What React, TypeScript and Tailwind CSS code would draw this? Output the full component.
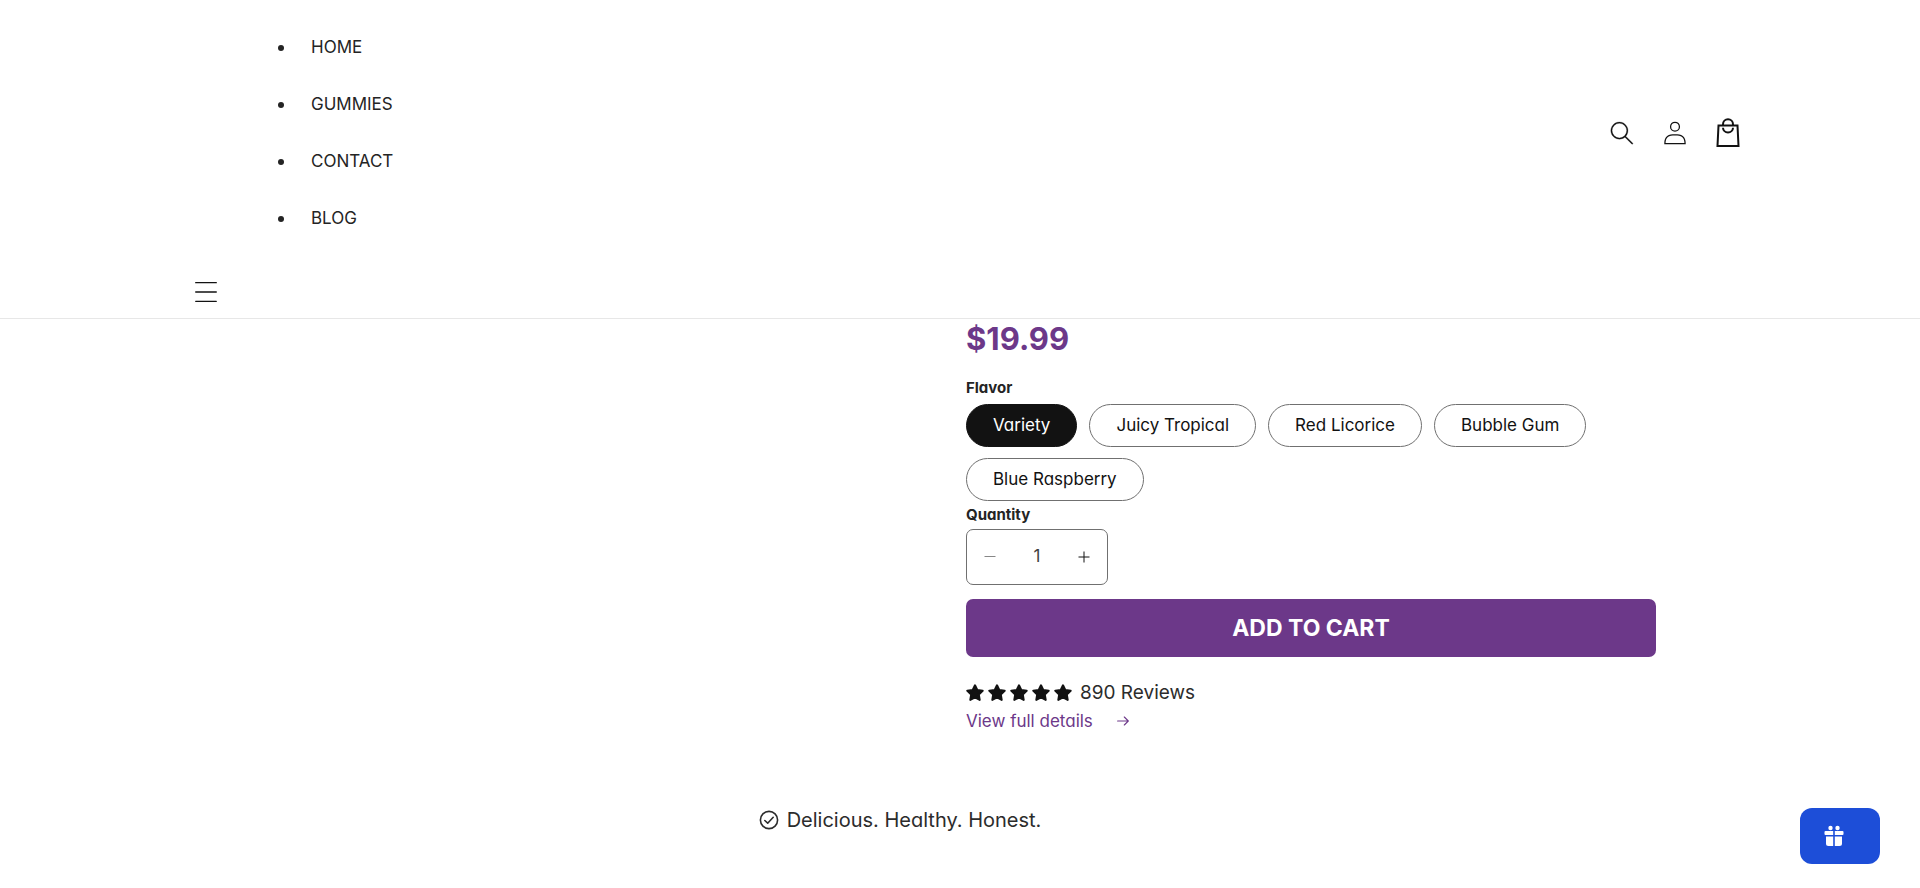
import { useState } from "react";

const links = ["HOME", "GUMMIES", "CONTACT", "BLOG"];
const flavors = ["Variety", "Juicy Tropical", "Red Licorice", "Bubble Gum", "Blue Raspberry"];

function SearchIcon() {
  return (
    <svg viewBox="0 0 18 19" className="h-6 w-6" fill="currentColor" stroke="currentColor" strokeWidth="0.2" aria-hidden="true">
      <path
        fillRule="evenodd"
        clipRule="evenodd"
        d="M11.03 11.68A5.784 5.784 0 112.85 3.5a5.784 5.784 0 018.18 8.18zm.26 1.12a6.78 6.78 0 11.72-.7l5.4 5.4a.5.5 0 11-.71.7l-5.41-5.4z"
      />
    </svg>
  );
}

function AccountIcon() {
  return (
    <svg viewBox="0 0 18 19" className="h-6 w-6" fill="currentColor" aria-hidden="true">
      <path
        fillRule="evenodd"
        clipRule="evenodd"
        d="M6 4.5a3 3 0 116 0 3 3 0 01-6 0zm3-4a4 4 0 100 8 4 4 0 000-8zm5.58 12.15c1.12.82 1.83 2.24 1.91 4.85H1.51c.08-2.6.79-4.03 1.9-4.85C4.66 11.75 6.5 11.5 9 11.5s4.35.26 5.58 1.15zM9 10.5c-2.5 0-4.65.24-6.17 1.35C1.27 12.98.5 14.93.5 18v.5h17V18c0-3.07-.77-5.02-2.33-6.15-1.52-1.1-3.67-1.35-6.17-1.35z"
      />
    </svg>
  );
}

function BagIcon() {
  return (
    <svg viewBox="0 0 24 30" className="h-[30px] w-6" fill="none" stroke="currentColor" strokeWidth="2" aria-hidden="true">
      <path d="M2.5 7.5h19l1 20.5h-21z" />
      <path d="M7 7.5V6.300a5 5 0 0 1 10 0v1.200" />
      <path d="M7 9.800a5 4.600 0 0 0 10 0" />
    </svg>
  );
}

function Star() {
  return (
    <svg viewBox="0 0 18 18" className="h-[18px] w-[18px]" fill="currentColor" stroke="currentColor" strokeWidth="2" strokeLinejoin="round" aria-hidden="true">
      <path d="M9 1.3l2.300 4.700 5.400.8-3.900 3.700.9 5.400L9 13.400l-4.700 2.500.9-5.400L1.300 6.800l5.400-.8z" />
    </svg>
  );
}

function Header() {
  return (
    <header className="border-b border-[#e7e7e7] bg-white">
      <div className="mx-auto max-w-[1600px] pt-[19px] pr-2.5 pb-1 pl-6">
        <div className="flex items-center justify-between">
          <nav>
            <ul className="pl-[94px]">
              {links.map((link) => (
                <li
                  key={link}
                  className="flex items-center py-4 text-[17px] leading-[25px] text-[#242424] before:h-1.5 before:w-1.5 before:rounded-full before:bg-[#242424]"
                >
                  <a href="#" className="pr-3 pl-[27px] hover:underline">
                    {link}
                  </a>
                </li>
              ))}
            </ul>
          </nav>
          <div className="flex gap-[9px]">
            <button aria-label="Search" className="flex h-11 w-11 items-center justify-center">
              <SearchIcon />
            </button>
            <a href="#" aria-label="Log in" className="flex h-11 w-11 items-center justify-center">
              <AccountIcon />
            </a>
            <a href="#" aria-label="Cart" className="flex h-11 w-11 items-center justify-center">
              <BagIcon />
            </a>
          </div>
        </div>
        <button aria-label="Menu" className="mt-[23px] flex h-11 w-11 items-center justify-center">
          <svg viewBox="0 0 22 20" className="h-5 w-[22px]" stroke="currentColor" strokeWidth="1.3" strokeLinecap="round" aria-hidden="true">
            <path d="M.7.7h20.6M.7 10h20.6M.7 19.3h20.6" />
          </svg>
        </button>
      </div>
    </header>
  );
}

function Product() {
  const [flavor, setFlavor] = useState("Variety");
  const [quantity, setQuantity] = useState(1);

  return (
    <section className="mx-auto grid max-w-[1392px] grid-cols-2 gap-3">
      <div className="col-start-2">
        <p className="text-[31px] leading-10 font-bold text-[#6c3889]">$19.99</p>

        <fieldset className="mt-[17px]">
          <legend className="text-[15px] leading-6 font-bold text-[#242424]">Flavor</legend>
          <div className="mt-1 flex flex-wrap gap-x-3 gap-y-[11px]">
            {flavors.map((name) => (
              <label
                key={name}
                className="cursor-pointer rounded-full border border-[#707070] px-[26px] py-2 text-[17px] leading-[25px] has-checked:border-[#121212] has-checked:bg-[#121212] has-checked:text-white"
              >
                <input
                  type="radio"
                  name="flavor"
                  value={name}
                  checked={flavor === name}
                  onChange={() => setFlavor(name)}
                  className="sr-only"
                />
                {name}
              </label>
            ))}
          </div>
        </fieldset>

        <label htmlFor="quantity" className="block text-[15px] leading-7 font-bold text-[#242424]">
          Quantity
        </label>
        <div className="flex h-14 w-[142px] items-center rounded-[7px] border border-[#707070]">
          <button
            aria-label="Decrease quantity"
            disabled={quantity === 1}
            onClick={() => setQuantity(quantity - 1)}
            className="flex h-full w-[46px] items-center justify-center disabled:opacity-50"
          >
            <svg viewBox="0 0 12 12" className="h-3 w-3" stroke="currentColor" aria-hidden="true">
              <path d="M.5 5.5h11" />
            </svg>
          </button>
          <input
            id="quantity"
            value={quantity}
            onChange={(e) => setQuantity(Math.max(1, Number(e.target.value) || 1))}
            className="min-w-0 flex-1 text-center text-[17px] text-[#404040] outline-none"
          />
          <button
            aria-label="Increase quantity"
            onClick={() => setQuantity(quantity + 1)}
            className="flex h-full w-[46px] items-center justify-center"
          >
            <svg viewBox="0 0 12 12" className="h-3 w-3" stroke="currentColor" aria-hidden="true">
              <path d="M.5 6h11M6 .5v11" />
            </svg>
          </button>
        </div>

        <button className="mt-3.5 h-[58px] w-full rounded-[7px] bg-[#6c3889] text-[23px] font-bold text-white hover:bg-[#5f3079]">
          ADD TO CART
        </button>

        <div className="mt-[22px] flex items-center gap-2">
          <div className="flex gap-1" role="img" aria-label="5 out of 5 stars">
            {[1, 2, 3, 4, 5].map((i) => (
              <Star key={i} />
            ))}
          </div>
          <span className="text-[19px] leading-7 text-[#2c2c2c]">890 Reviews</span>
        </div>
        <a href="#" className="mt-0.5 inline-flex items-center gap-6 text-[17px] leading-6 text-[#6c3889]">
          View full details
          <svg viewBox="0 0 12 10" className="h-2.5 w-3" fill="none" stroke="currentColor" strokeWidth="1.1" strokeLinecap="round" strokeLinejoin="round" aria-hidden="true">
            <path d="M.6 5h10.6M7.3 1l4 4-4 4" />
          </svg>
        </a>
      </div>
    </section>
  );
}

export default function App() {
  return (
    <div className="min-h-screen bg-white font-[Inter,sans-serif] text-[#121212] [font-feature-settings:'cv11']">
      <Header />
      <Product />

      <div className="mt-[73px] flex items-center justify-center gap-2 pr-30 text-xl leading-7 text-[#2c2c2c]">
        <svg viewBox="0 0 20 20" className="h-5 w-5" fill="none" stroke="currentColor" strokeWidth="1.6" strokeLinecap="round" strokeLinejoin="round" aria-hidden="true">
          <circle cx="10" cy="10" r="8.6" />
          <path d="M5.8 10.5l2.9 2.7 5.5-5.9" />
        </svg>
        <p>Delicious. Healthy. Honest.</p>
      </div>

      <button aria-label="Rewards" className="fixed right-10 bottom-6 flex h-14 w-20 items-center rounded-xl bg-[#1d4ed8] pl-6 text-white">
        <svg viewBox="0 0 20 22" className="h-[22px] w-5" fill="currentColor" aria-hidden="true">
          <circle cx="6.5" cy="3" r="2.2" />
          <circle cx="13.5" cy="3" r="2.2" />
          <path d="M1.5 6h7.7v4H1.5a1 1 0 0 1-1-1V7a1 1 0 0 1 1-1zM10.8 6h7.7a1 1 0 0 1 1 1v2a1 1 0 0 1-1 1h-7.7zM2 11.6h7.2V21H4.5A2.5 2.5 0 0 1 2 18.5zM10.8 11.6H18v6.900a2.500 2.500 0 0 1-2.500 2.500h-4.700z" />
        </svg>
      </button>
    </div>
  );
}
